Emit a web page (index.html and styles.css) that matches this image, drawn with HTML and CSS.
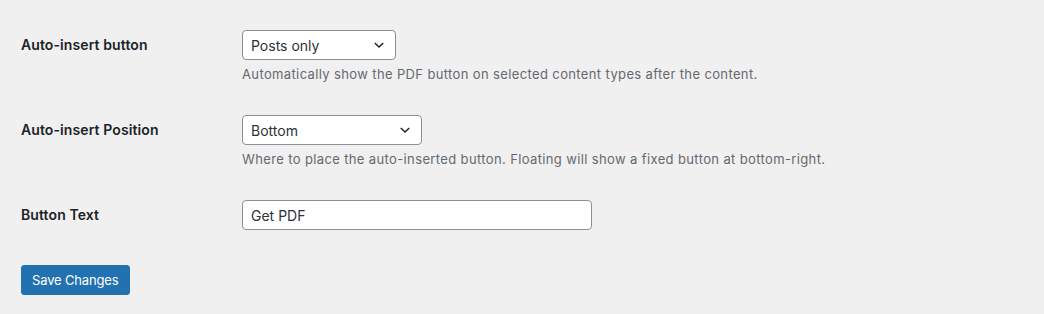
FILE: index.html
```html
<!DOCTYPE html>
<html>
<head>
<meta charset="utf-8">
<link rel="stylesheet" href="styles.css">
</head>
<body>
<form class="settings">
  <div class="row">
    <div class="label">Auto-insert button</div>
    <div class="field">
      <div class="select w1"><span>Posts only</span><svg class="chev" width="12" height="8" viewBox="0 0 12 8"><path d="M1.8 2 L6 6 L10.2 2" fill="none" stroke="#1d2327" stroke-width="1.5"/></svg></div>
      <p class="desc">Automatically show the PDF button on selected content types after the content.</p>
    </div>
  </div>
  <div class="row">
    <div class="label">Auto-insert Position</div>
    <div class="field">
      <div class="select w2"><span>Bottom</span><svg class="chev" width="12" height="8" viewBox="0 0 12 8"><path d="M1.8 2 L6 6 L10.2 2" fill="none" stroke="#1d2327" stroke-width="1.5"/></svg></div>
      <p class="desc">Where to place the auto-inserted button. Floating will show a fixed button at bottom-right.</p>
    </div>
  </div>
  <div class="row">
    <div class="label">Button Text</div>
    <div class="field">
      <div class="input">Get PDF</div>
    </div>
  </div>
  <div class="submit">
    <button type="button" class="button">Save Changes</button>
  </div>
</form>
</body>
</html>
```
FILE: styles.css
```css
html, body {
  margin: 0;
  padding: 0;
  background: #f0f0f1;
}
body {
  font-family: Inter, "Liberation Sans", sans-serif;
  color: #1d2327;
  font-size: 13px;
}
.settings {
  padding: 15px 21px 0 21px;
}
.row {
  display: flex;
  padding: 15px 0;
}
.label {
  width: 221px;
  flex: none;
  font-size: 14px;
  font-weight: 600;
  line-height: 18px;
  padding-top: 6px;
  color: #1d2327;
  letter-spacing: 0.1px;
}
.field {
  display: flex;
  flex-direction: column;
  align-items: flex-start;
}
.select, .input {
  box-sizing: border-box;
  height: 30px;
  border: 1px solid #8c8f94;
  border-radius: 4px;
  background: #fff;
  font-size: 14px;
  color: #2c3338;
  display: flex;
  align-items: center;
  padding: 0 8px;
}
.select {
  justify-content: space-between;
  padding-right: 10px;
}
.w1 { width: 154px; }
.w2 { width: 180px; }
.input { width: 350px; }
.chev { display: block; }
.desc {
  margin: 4px 0 0 0;
  line-height: 21px;
  font-size: 13px;
  color: #646970;
  letter-spacing: 0.37px;
}
.submit {
  padding-top: 20px;
}
.button {
  box-sizing: border-box;
  height: 30px;
  padding: 0 10px;
  background: #2271b1;
  border: 1px solid #2271b1;
  border-radius: 3px;
  color: #fff;
  font-family: Inter, "Liberation Sans", sans-serif;
  font-size: 13px;
  line-height: 28px;
  letter-spacing: -0.15px;
}
```
